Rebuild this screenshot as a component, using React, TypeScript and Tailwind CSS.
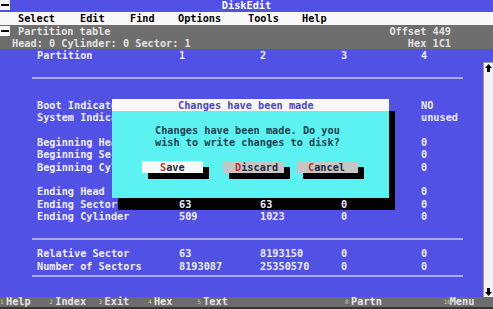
import React from "react";

const ROW = "h-[12.36px] leading-[12.36px]";

function SysBox() {
  return (
    <div className="flex h-[10px] w-[10px] items-center justify-center bg-[#f6f6f6]">
      <div className="h-[2px] w-[8px] bg-black" />
    </div>
  );
}

type Row =
  | { t: "blank" }
  | { t: "line" }
  | { t: "text"; label: string; v: string[] };

const rows: Row[] = [
  { t: "text", label: "Partition", v: ["1", "2", "3", "4"] },
  { t: "blank" },
  { t: "line" },
  { t: "blank" },
  { t: "text", label: "Boot Indicator", v: ["", "", "", "NO"] },
  { t: "text", label: "System Indicator", v: ["", "", "", "unused"] },
  { t: "blank" },
  { t: "text", label: "Beginning Head", v: ["", "", "", "0"] },
  { t: "text", label: "Beginning Sector", v: ["", "", "", "0"] },
  { t: "text", label: "Beginning Cylinder", v: ["", "", "", "0"] },
  { t: "blank" },
  { t: "text", label: "Ending Head", v: ["", "", "", "0"] },
  { t: "text", label: "Ending Sector", v: ["63", "63", "0", "0"] },
  { t: "text", label: "Ending Cylinder", v: ["509", "1023", "0", "0"] },
  { t: "blank" },
  { t: "line" },
  { t: "text", label: "Relative Sector", v: ["63", "8193150", "0", "0"] },
  { t: "text", label: "Number of Sectors", v: ["8193087", "25350570", "0", "0"] },
  { t: "line" },
  { t: "blank" },
];

const footer: { k: string; label: string }[] = [
  { k: "1", label: "Help" },
  { k: "2", label: "Index" },
  { k: "3", label: "Exit" },
  { k: "4", label: "Hex" },
  { k: "5", label: "Text" },
  { k: "", label: "" },
  { k: "", label: "" },
  { k: "8", label: "Partn" },
  { k: "", label: "" },
  { k: "10", label: "Menu" },
];

function Arrow({ down }: { down?: boolean }) {
  return (
    <div className="flex h-[10px] items-center justify-center">
      <svg width="7" height="8" viewBox="0 0 7 8" className={down ? "rotate-180" : ""}>
        <path d="M3.5 0 L7 4 H5 V8 H2 V4 H0 Z" fill="#000" />
      </svg>
    </div>
  );
}

function Button({ label, pl, face }: { label: string; pl: string; face: string }) {
  return (
    <div className={`h-[12.36px] w-[61px] shadow-[6px_6px_0_0_#000] ${face} ${pl} leading-[12.36px] text-[#2a2a3c]`}>
      <span className="text-[#cc2f2f]">{label[0]}</span>
      {label.slice(1)}
    </div>
  );
}

export default function App() {
  return (
    <div className="relative h-[309px] w-[493px] overflow-hidden bg-[#5151e5] font-['DejaVu_Sans_Mono',monospace] text-[10.24px] font-bold whitespace-pre">
      {/* title bar */}
      <div className={`flex items-start ${ROW} bg-[#5151e5]`}>
        <SysBox />
        <div className="flex-1 text-center leading-[11px] text-white">DiskEdit</div>
        <div className="w-[10px]" />
      </div>
      {/* menu bar */}
      <div className={`flex ${ROW} bg-[#f8f8f8] pl-[18px] text-black`}>
        <span className="w-[62px]">Select</span>
        <span className="w-[50px]">Edit</span>
        <span className="w-[48px]">Find</span>
        <span className="w-[70px]">Options</span>
        <span className="w-[54px]">Tools</span>
        <span>Help</span>
      </div>
      {/* info bars */}
      <div className="bg-[#6e6e6e] text-[#e2e2e2]">
        <div className={`flex items-center ${ROW}`}>
          <SysBox />
          <span className="ml-[8px] flex-1">Partition table</span>
          <span className="mr-[42px]">Offset 449</span>
        </div>
        <div className={`flex items-center ${ROW} pl-[12px]`}>
          <span className="flex-1">Head: 0 Cylinder: 0 Sector: 1</span>
          <span className="mr-[42px]">Hex 1C1</span>
        </div>
      </div>
      {/* content */}
      <div className="flex">
        <div className="w-[483px]">
          {rows.map((r, i) => {
            if (r.t === "blank") return <div key={i} className="h-[12.36px]" />;
            if (r.t === "line")
              return (
                <div key={i} className="relative z-10 h-[12.36px] pl-[32px] pt-[3px]">
                  <div className="h-[2px] w-[431px] bg-[#a9a9f5]" />
                </div>
              );
            return (
              <div key={i} className={`relative z-10 flex ${ROW} pl-[37px] text-[#ececff]`}>
                <span className="w-[142px]">{r.label}</span>
                <span className="w-[81px]">{r.v[0]}</span>
                <span className="w-[81px]">{r.v[1]}</span>
                <span className="w-[80px]">{r.v[2]}</span>
                <span>{r.v[3]}</span>
              </div>
            );
          })}
        </div>
        <div className="flex w-[10px] flex-col">
          <div className="h-[12.36px]" />
          <div className="flex h-[234.84px] flex-col justify-between border-l border-t border-[#9a9a9a] bg-[#f4f4f4]">
            <Arrow />
            <Arrow down />
          </div>
        </div>
      </div>
      {/* footer */}
      <div className="box-border flex h-[12.36px] border-b-2 border-[#2c3a2c] bg-[#6c6c6c] leading-[11px] text-[#e6e6e6]">
        {footer.map((f, i) => (
          <div key={i} className="flex w-[49.3px] items-center">
            {f.k && (
              <span className="w-[6px] overflow-hidden text-[6px] leading-[6px] font-normal text-[#cdd26a]">{f.k}</span>
            )}
            <span>{f.label}</span>
          </div>
        ))}
      </div>

      {/* dialog shadow */}
      <div className="absolute left-[118px] top-[111.26px] z-0 h-[98.9px] w-[277px] bg-black" />
      {/* dialog */}
      <div className="absolute left-[112px] top-[98.9px] z-20 flex h-[98.9px] w-[277px] flex-col bg-[#5cf2f2]">
        <div className={`${ROW} bg-[#f8f8f8] pl-[66px] text-[#4848c8]`}>Changes have been made</div>
        <div className="h-[12.36px]" />
        <div className={`${ROW} pl-[43px] text-[#1c4450]`}>Changes have been made. Do you</div>
        <div className={`${ROW} pl-[43px] text-[#1c4450]`}>wish to write changes to disk?</div>
        <div className="h-[12.36px]" />
        <div className="flex pl-[30px]">
          <Button label="Save" pl="pl-[18px]" face="bg-[#f8f8f8]" />
          <div className="w-[20px]" />
          <Button label="Discard" pl="pl-[12px]" face="bg-[#c6c6c6]" />
          <div className="w-[13px]" />
          <Button label="Cancel" pl="pl-[11px]" face="bg-[#c6c6c6]" />
        </div>
      </div>
    </div>
  );
}
